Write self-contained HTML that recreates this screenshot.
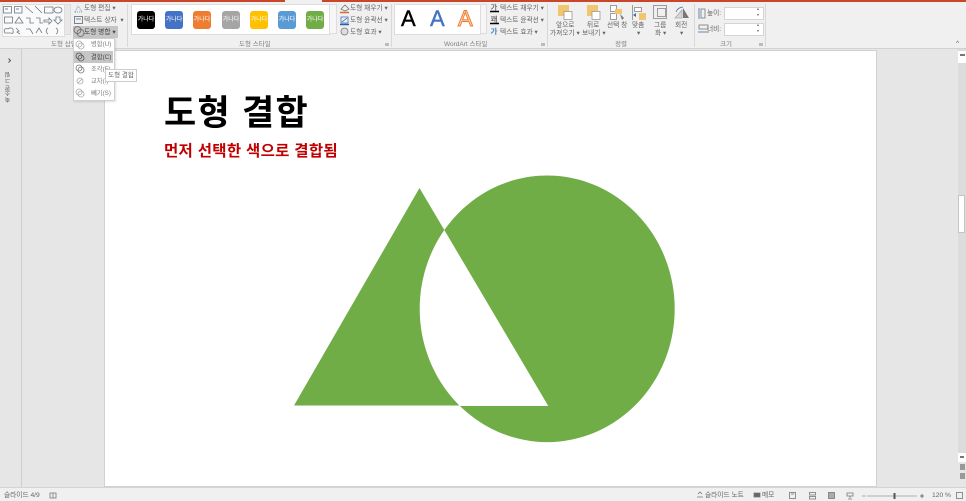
<!DOCTYPE html>
<html lang="ko"><head><meta charset="utf-8"><style>
html,body{margin:0;padding:0;width:966px;height:501px;overflow:hidden;background:#e6e6e6}
body{position:relative;font-family:"Liberation Sans","Noto Sans CJK KR",sans-serif}
.a{position:absolute}
.t{position:absolute;font-size:6.7px;line-height:9px;color:#666;white-space:nowrap}
.g{position:absolute;top:39.5px;font-size:6.5px;line-height:9px;color:#808080;white-space:nowrap}
.sep{position:absolute;top:4px;width:1px;height:43px;background:#d8d8d8}
.sw{position:absolute;top:11px;width:18px;height:18px;border-radius:3px;color:#fff;font-size:6px;line-height:18px;text-align:center;white-space:nowrap;overflow:hidden}
.wa{position:absolute;top:6px;font-size:22px;line-height:26px;font-weight:400}
.dl{position:absolute;top:43px;width:4px;height:3px;background:#bbb}
svg{position:absolute;overflow:visible}
.m{position:absolute;left:91px;font-size:6.3px;line-height:9px;color:#808080;white-space:nowrap}
</style></head><body>

<!-- title stripe -->
<div class="a" style="left:0;top:0;width:966px;height:2px;background:#c8472b"></div>
<div class="a" style="left:285px;top:0;width:37px;height:2px;background:#f0f0f0"></div>
<!-- ribbon -->
<div class="a" style="left:0;top:2px;width:966px;height:46px;background:#f0f0f0;border-bottom:1px solid #d2d2d2"></div>

<!-- shape gallery -->
<div class="a" style="left:2px;top:4px;width:61px;height:31px;background:#fafafa;border:1px solid #ddd"></div>
<svg style="left:0;top:0" width="75" height="40" fill="none" stroke="#707a86" stroke-width=".8">
<rect x="3.500" y="6.500" width="8" height="6.500"/><path d="M5 9h3" stroke="#3b6ea5"/><rect x="14.500" y="6.500" width="7.500" height="6.500"/><path d="M16 9h3" stroke="#3b6ea5"/>
<path d="M25 6l8 7M35 6l7 7"/><rect x="44.500" y="7" width="8.500" height="6"/><ellipse cx="58" cy="10" rx="4" ry="3"/>
<rect x="4.500" y="17" width="8" height="6"/><path d="M15 23l4-6 4 6zM26 18h4v5h4M36 18h4v5h3M44 20h5v-2l3 3-3 3v-2h-5zM56 17h4v3h2l-4 4-4-4h2z"/>
<path d="M5 33c-2-3 1-6 3-4 2-2 6-1 5 2 1 2-1 3-2 2zM16 28l3 3-2 1 3 2M26 29h4l3 5M36 33l3-5 3 5M48 28c-2 1-1 2-2 3 1 1 0 2 2 3M56 28c2 1 1 2 2 3-1 1 0 2-2 3"/>
</svg>
<div class="a" style="left:64px;top:4px;width:7px;height:31px;background:#e8e8e8;border:1px solid #ddd;box-sizing:border-box"></div>
<div class="g" style="left:51px">도형 삽입</div>

<!-- shape commands -->
<svg style="left:0;top:0" width="130" height="40" fill="none" stroke="#5b7fa8" stroke-width=".8">
<path d="M75 12l3-6 4 6z" stroke-dasharray="1 1"/>
<rect x="74.500" y="16.500" width="8" height="7" stroke="#666"/><path d="M76 19h5" stroke="#3b6ea5"/>
</svg>
<div class="t" style="left:84px;top:3.500px">도형 편집 ▾</div>
<div class="t" style="left:84px;top:15.500px">텍스트 상자 &nbsp;▾</div>
<div class="a" style="left:73px;top:26px;width:45px;height:12px;background:#c6c6c6"></div>
<svg style="left:0;top:0" width="130" height="40" fill="none" stroke="#666" stroke-width=".8"><circle cx="77.500" cy="30" r="3.500"/><circle cx="80.500" cy="33" r="3.500"/></svg>
<div class="t" style="left:84px;top:27.500px;color:#444">도형 병합 ▾</div>
<div class="sep" style="left:127px"></div>

<!-- shape style gallery -->
<div class="a" style="left:131px;top:4px;width:197px;height:29px;background:#fff;border:1px solid #ddd"></div>
<div class="sw" style="left:137px;background:#000">가나다</div>
<div class="sw" style="left:165px;background:#4472c4">가나다</div>
<div class="sw" style="left:193px;background:#ed7d31">가나다</div>
<div class="sw" style="left:222px;background:#a5a5a5">가나다</div>
<div class="sw" style="left:250px;background:#ffc000">가나다</div>
<div class="sw" style="left:278px;background:#5b9bd5">가나다</div>
<div class="sw" style="left:306px;background:#70ad47">가나다</div>
<div class="a" style="left:329px;top:4px;width:8px;height:30px;background:#f6f6f6;border:1px solid #ddd;box-sizing:border-box"></div>
<div class="g" style="left:239px">도형 스타일</div>
<div class="dl" style="left:385px"></div>

<svg style="left:0;top:0" width="360" height="40" fill="none" stroke="#777" stroke-width=".8">
<path d="M341 9l4-4 4 4-4 2z"/><path d="M340 12.500h9" stroke="#e06a2b" stroke-width="1.500"/>
<rect x="341" y="17" width="7" height="6" stroke="#4472c4"/><path d="M342 22l5-4" stroke="#2f5d9e"/><path d="M340 24.500h9" stroke="#2f5d9e" stroke-width="1.500"/>
<circle cx="344.500" cy="31.500" r="3.500" fill="#ddd"/>
</svg>
<div class="t" style="left:350px;top:3.500px">도형 채우기 ▾</div>
<div class="t" style="left:350px;top:15.500px">도형 윤곽선 ▾</div>
<div class="t" style="left:350px;top:27.500px">도형 효과 ▾</div>
<div class="sep" style="left:391px"></div>

<!-- WordArt -->
<div class="a" style="left:394px;top:4px;width:85px;height:29px;background:#fff;border:1px solid #ddd"></div>
<div class="wa" style="left:401px;color:#000;-webkit-text-stroke:.4px #000">A</div>
<div class="wa" style="left:430px;color:#4472c4;-webkit-text-stroke:.4px #4472c4">A</div>
<div class="wa" style="left:458px;color:#fbd9c2;-webkit-text-stroke:1px #ed7d31">A</div>
<div class="a" style="left:480px;top:4px;width:7px;height:30px;background:#f6f6f6;border:1px solid #ddd;box-sizing:border-box"></div>
<div class="g" style="left:444px">WordArt 스타일</div>
<div class="dl" style="left:541px"></div>
<svg style="left:0;top:0" width="550" height="40" fill="none">
<path d="M490 11.500h9" stroke="#000" stroke-width="1.500"/><path d="M490 23.500h9" stroke="#000" stroke-width="1.500"/>
</svg>
<div class="t" style="left:490.500px;top:2.500px;font-size:7.500px;color:#333">가</div>
<div class="t" style="left:490.500px;top:14.500px;font-size:7.500px;color:#333">꽤</div>
<div class="t" style="left:490.500px;top:27px;font-size:7.500px;color:#4a86c8;font-weight:700">가</div>
<div class="t" style="left:500px;top:3.500px">텍스트 채우기 ▾</div>
<div class="t" style="left:500px;top:15.500px">텍스트 윤곽선 ▾</div>
<div class="t" style="left:500px;top:27.500px">텍스트 효과 ▾</div>
<div class="sep" style="left:547px"></div>

<!-- arrange -->
<svg style="left:0;top:0" width="700" height="40" stroke-width=".8">
<rect x="558" y="5" width="11" height="11" fill="#f2c56f"/><rect x="564" y="11.500" width="8" height="8" fill="#fff" stroke="#999"/>
<rect x="587" y="5" width="11" height="11" fill="#f2c56f"/><rect x="592" y="11.500" width="8" height="8" fill="#fff" stroke="#999"/>
<rect x="610.500" y="5.500" width="6" height="6" fill="#fff" stroke="#888"/><rect x="610.500" y="13.500" width="6" height="6" fill="#fff" stroke="#888"/><rect x="615" y="9" width="7" height="5" fill="#f2c56f"/><path d="M620 14l2 6 2-2z" fill="#777"/>
<path d="M632.500 5v15" stroke="#888"/><rect x="634.500" y="7.500" width="7" height="4" fill="#fff" stroke="#888"/><rect x="639" y="13" width="7" height="7" fill="#f2c56f"/><path d="M633 15l3-2v4z" fill="#3b6ea5"/>
<rect x="653.500" y="5.500" width="13" height="13" fill="none" stroke="#888"/><rect x="657.500" y="8.500" width="8" height="8" fill="none" stroke="#888"/>
<path d="M675 18l7-8v8z" fill="#d8d8d8" stroke="#aaa"/><path d="M683 8l6 10h-6z" fill="#777"/><path d="M676 12c1-3 4-5 7-5" fill="none" stroke="#3b6ea5"/>
</svg>
<div class="t" style="left:556px;top:21px">앞으로</div>
<div class="t" style="left:550px;top:29px">가져오기 ▾</div>
<div class="t" style="left:587px;top:21px">뒤로</div>
<div class="t" style="left:582px;top:29px">보내기 ▾</div>
<div class="t" style="left:607px;top:21px">선택 창</div>
<div class="t" style="left:632px;top:21px">맞춤</div>
<div class="t" style="left:637px;top:29px">▾</div>
<div class="t" style="left:654px;top:21px">그룹</div>
<div class="t" style="left:655px;top:29px">화 ▾</div>
<div class="t" style="left:675px;top:21px">회전</div>
<div class="t" style="left:680px;top:29px">▾</div>
<div class="g" style="left:615px">정렬</div>
<div class="sep" style="left:694px"></div>

<!-- size -->
<svg style="left:0;top:0" width="730" height="40" fill="none" stroke="#777" stroke-width=".8">
<rect x="701" y="9" width="4" height="9"/><path d="M699 8v11" stroke="#3b6ea5"/>
<rect x="699" y="25" width="9" height="4"/><path d="M698 32h11" stroke="#3b6ea5"/>
</svg>
<div class="t" style="left:707px;top:8.500px">높이:</div>
<div class="t" style="left:707px;top:24.500px">너비:</div>
<div class="a" style="left:724px;top:7px;width:38px;height:11px;background:#fff;border:1px solid #d4d4d4"></div>
<div class="a" style="left:724px;top:22.500px;width:38px;height:11px;background:#fff;border:1px solid #d4d4d4"></div>
<div class="t" style="left:757px;top:6px;font-size:4px;line-height:6px">▴<br>▾</div>
<div class="t" style="left:757px;top:22px;font-size:4px;line-height:6px">▴<br>▾</div>
<div class="g" style="left:720px">크기</div>
<div class="dl" style="left:759px"></div>
<div class="sep" style="left:765px"></div>
<div class="t" style="left:956px;top:39px;color:#666">^</div>

<!-- left collapsed pane -->
<div class="a" style="left:0;top:49px;width:21px;height:438px;background:#e6e6e6;border-right:1px solid #cfcfcf"></div>
<svg style="left:0;top:0" width="20" height="70" fill="none" stroke="#555" stroke-width="1"><path d="M8.500 58.500l2 2-2 2"/></svg>
<div class="t" style="left:5px;top:72px;writing-mode:vertical-rl;font-size:5.800px;line-height:9px;transform:rotate(180deg);color:#555">축소판 그림</div>

<!-- slide -->
<div class="a" style="left:105px;top:51px;width:771px;height:435px;background:#fff;box-shadow:0 0 0 1px #d2d2d2"></div>
<div class="a" style="left:164px;top:89px;font-size:35px;line-height:50px;font-weight:700;color:#000;white-space:nowrap;letter-spacing:1.300px">도형 결합</div>
<div class="a" style="left:164px;top:140px;font-size:15.500px;line-height:24px;font-weight:700;color:#c00000;white-space:nowrap;letter-spacing:.3px">먼저 선택한 색으로 결합됨</div>

<svg style="left:0;top:0" width="966" height="501">
<path fill="#70ad47" fill-rule="evenodd" d="M419.500 188L294 405.500H548Z M547.250 175.500A127.500 133.300 0 1 1 547.150 175.500Z"/>
<path d="M459 405.500h89" stroke="#fff" stroke-width="1" opacity=".9"/>
</svg>

<!-- right scrollbar -->
<div class="a" style="left:958px;top:49px;width:8px;height:438px;background:#dcdcdc"></div>
<div class="a" style="left:958px;top:51px;width:8px;height:12px;background:#fff"></div>
<div class="a" style="left:959.500px;top:54px;width:5px;height:2px;background:#777"></div>
<div class="a" style="left:958px;top:195px;width:7px;height:38px;background:#fff;border:1px solid #c4c4c4;box-sizing:border-box"></div>
<div class="a" style="left:958px;top:453px;width:8px;height:34px;background:#e6e6e6"></div>
<div class="a" style="left:958px;top:453px;width:8px;height:9px;background:#fff"></div>
<div class="a" style="left:960px;top:456px;width:4px;height:2px;background:#777"></div>
<div class="a" style="left:960px;top:464px;width:5px;height:6px;background:#999"></div>
<div class="a" style="left:960px;top:473px;width:5px;height:6px;background:#999"></div>

<!-- dropdown -->
<div class="a" style="left:73px;top:38px;width:40px;height:61px;background:#fff;border:1px solid #d0d0d0;box-shadow:1px 1px 2px rgba(0,0,0,.12)"></div>
<div class="a" style="left:74px;top:51px;width:39px;height:12px;background:#c6c6c6"></div>
<svg style="left:0;top:0" width="120" height="100" fill="none" stroke="#aaa" stroke-width=".8">
<circle cx="79" cy="44" r="3"/><circle cx="81" cy="46" r="3"/>
<circle cx="79" cy="56" r="3" stroke="#555"/><circle cx="81" cy="58" r="3" stroke="#555"/>
<circle cx="79" cy="68" r="3" stroke="#777"/><circle cx="81" cy="70" r="3" stroke="#777"/>
<circle cx="80" cy="81" r="3"/><path d="M78 83l4-4"/>
<circle cx="79" cy="92" r="3"/><circle cx="81" cy="94" r="3"/>
</svg>
<div class="m" style="top:40px">병합(U)</div>
<div class="m" style="top:52.500px;color:#444">결합(C)</div>
<div class="m" style="top:64.500px">조각(F)</div>
<div class="m" style="top:77px">교차(I)</div>
<div class="m" style="top:89px">빼기(S)</div>
<!-- tooltip -->
<div class="a" style="left:105px;top:69px;width:30px;height:11px;background:#fff;border:1px solid #ccc;font-size:6.500px;line-height:11px;color:#666;text-align:center;white-space:nowrap">도형 결합</div>

<!-- status bar -->
<div class="a" style="left:0;top:487px;width:966px;height:14px;background:#f0f0f0;border-top:1px solid #d4d4d4;box-sizing:border-box"></div>
<div class="t" style="left:4px;top:491px;color:#666">슬라이드 4/9</div>
<svg style="left:0;top:0" width="966" height="501" fill="none" stroke="#777" stroke-width=".8">
<path d="M50 493h6v5h-6zM53 493v5"/>
<path d="M698 494l2-2 2 2M697 497h6"/>
<path d="M754 493h6v4h-6z" fill="#666"/>
<rect x="789.500" y="492.500" width="6" height="6"/><path d="M791 494h3"/>
<rect x="809.500" y="492.500" width="6" height="2.500"/><rect x="809.500" y="496.500" width="6" height="2.500"/>
<rect x="828.500" y="492.500" width="6" height="6" fill="#aaa"/>
<path d="M847 493h6v3h-6zM850 496v2M848 499h4"/>
<path d="M862 496h4M867 496h50" stroke="#999"/><path d="M894.500 493v6" stroke="#555" stroke-width="2"/>
<path d="M920 496h4M922 494v4" stroke="#555"/>
<rect x="956.500" y="492.500" width="6" height="6"/>
</svg>
<div class="t" style="left:705px;top:491px;color:#666">슬라이드 노트</div>
<div class="t" style="left:762px;top:491px;color:#666">메모</div>
<div class="t" style="left:932px;top:491px;color:#666">120 %</div>
</body></html>
